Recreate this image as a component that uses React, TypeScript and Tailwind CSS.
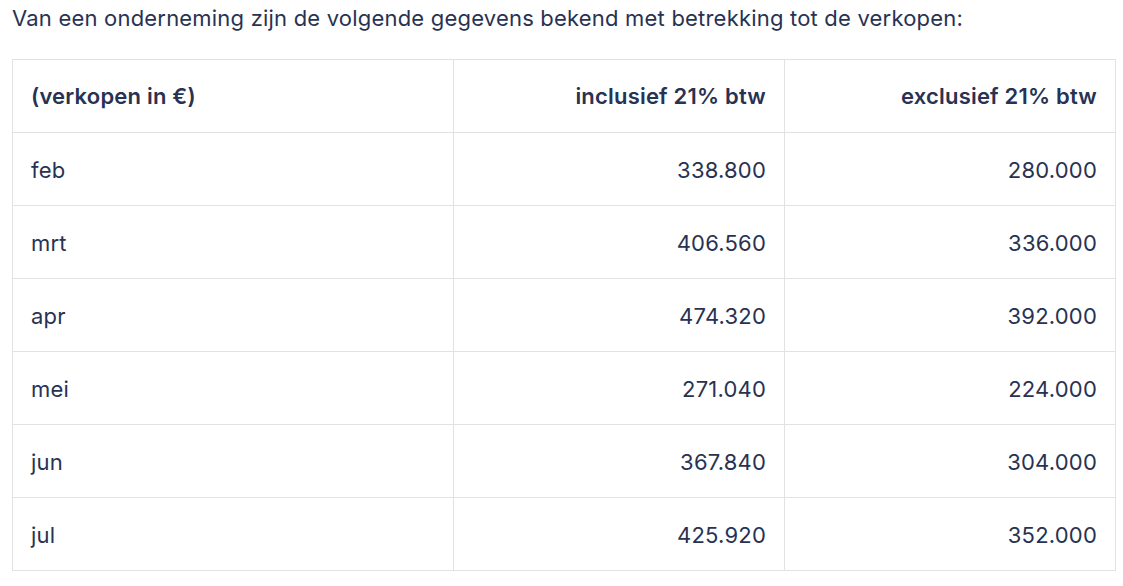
import React from "react";

const rows: [string, string, string][] = [
  ["feb", "338.800", "280.000"],
  ["mrt", "406.560", "336.000"],
  ["apr", "474.320", "392.000"],
  ["mei", "271.040", "224.000"],
  ["jun", "367.840", "304.000"],
  ["jul", "425.920", "352.000"],
];

export default function App() {
  return (
    <div
      className="bg-white w-[1123px] h-[586px] overflow-hidden text-[#283252] tracking-[0.2px]"
      style={{ fontFamily: 'Inter, sans-serif' }}
    >
      <div className="pl-3 pt-[4px]">
        <p className="text-[22px] leading-[28px] m-0">
          Van een onderneming zijn de volgende gegevens bekend met betrekking tot de verkopen:
        </p>
        <table className="mt-[27px] w-[1103px] border-collapse table-fixed text-[22px]">
          <colgroup>
            <col className="w-[441px]" />
            <col className="w-[331px]" />
            <col className="w-[331px]" />
          </colgroup>
          <thead>
            <tr className="h-[73px]">
              <th className="border border-[#e2e2e2] px-[18px] text-left font-semibold">(verkopen in €)</th>
              <th className="border border-[#e2e2e2] px-[18px] text-right font-semibold">inclusief 21% btw</th>
              <th className="border border-[#e2e2e2] px-[18px] text-right font-semibold">exclusief 21% btw</th>
            </tr>
          </thead>
          <tbody>
            {rows.map((r) => (
              <tr key={r[0]} className="h-[73px]">
                <td className="border border-[#e2e2e2] px-[18px] pt-[3px] text-left">{r[0]}</td>
                <td className="border border-[#e2e2e2] px-[18px] pt-[3px] text-right">{r[1]}</td>
                <td className="border border-[#e2e2e2] px-[18px] pt-[3px] text-right">{r[2]}</td>
              </tr>
            ))}
          </tbody>
        </table>
      </div>
    </div>
  );
}
